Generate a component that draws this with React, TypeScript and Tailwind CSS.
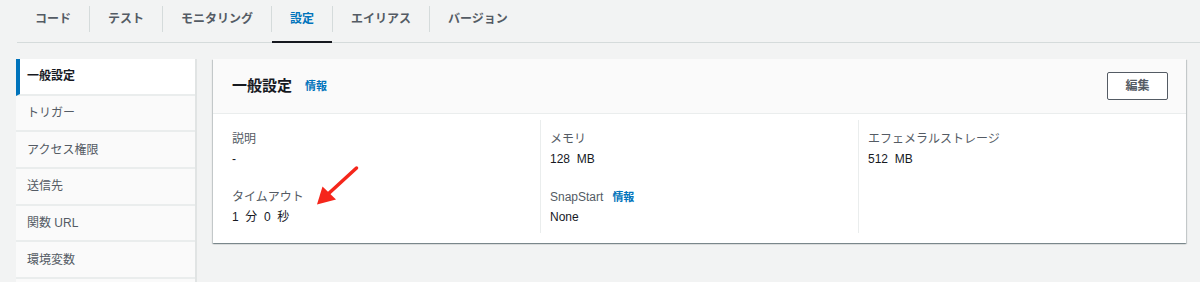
import React from "react";

const tabs = ["コード", "テスト", "モニタリング", "設定", "エイリアス", "バージョン"];
const navItems = ["一般設定", "トリガー", "アクセス権限", "送信先", "関数 URL", "環境変数", ""];

function Field({ label, value, info, className = "" }: { label: string; value: string; info?: boolean; className?: string }) {
  return (
    <div className={className}>
      <div className="flex items-center text-[12px] leading-[20px] text-[#545b64]">
        <span>{label}</span>
        {info && <span className="ml-[9px] text-[11px] font-bold text-[#0073bb]">情報</span>}
      </div>
      <div className="text-[12px] leading-[20px] text-[#16191f] whitespace-pre">{value}</div>
    </div>
  );
}

export default function App() {
  return (
    <div className="relative w-[1200px] h-[282px] overflow-hidden bg-[#f2f3f3] font-[family-name:'Liberation_Sans','Noto_Sans_CJK_JP',sans-serif]">
      {/* Tabs */}
      <div className="ml-[17px] h-[43px] border-b border-[#d5dbdb] flex">
        {tabs.map((t, i) => (
          <React.Fragment key={t}>
            {i > 0 && <div className="w-px h-[26px] bg-[#d5dbdb] self-start mt-[6px]" />}
            <div
              className={
                "relative h-full flex items-center pb-[4px] px-[18px] text-[12px] font-bold " +
                (t === "設定" ? "text-[#0073bb]" : "text-[#545b64]")
              }
            >
              {t}
              {t === "設定" && <div className="absolute left-0 right-0 bottom-[-1px] h-[2px] bg-[#16191f]" />}
            </div>
          </React.Fragment>
        ))}
      </div>

      <div className="flex gap-4 pl-4 pr-[14px] pt-4">
        {/* Side nav */}
        <div className="w-[181px] shrink-0 border-r-2 border-[#e1e4e4] flex flex-col">
          {navItems.map((n, i) => (
            <div
              key={i}
              className={
                "h-[36.67px] shrink-0 border-b-2 border-[#eaeded] flex items-center text-[12px] " +
                (i === 0
                  ? "bg-white border-l-4 border-l-[#0073bb] pl-[7px] font-bold text-[#16191f]"
                  : "bg-[#fafafa] pl-[11px] text-[#545b64]")
              }
            >
              {n}
            </div>
          ))}
        </div>

        {/* Panel */}
        <div className="flex-1 self-start bg-white shadow-[0_1px_1px_0_rgba(0,28,36,0.3),1px_1px_1px_0_rgba(0,28,36,0.15),-1px_1px_1px_0_rgba(0,28,36,0.15)]">
          <div className="h-[55px] bg-[#fafafa] border-b border-[#eaeded] flex items-center justify-between pl-[19px] pr-[18px]">
            <div className="flex items-center">
              <span className="text-[15px] font-bold text-[#16191f] leading-[20px]">一般設定</span>
              <span className="ml-[13px] text-[11px] font-bold text-[#0073bb] leading-[20px]">情報</span>
            </div>
            <button className="w-[61px] h-[28px] border border-[#545b64] rounded-[2px] bg-white text-[12px] font-bold text-[#545b64]">
              編集
            </button>
          </div>
          <div className="pl-[9px] pr-[10px] pt-[6px] pb-[10px] grid grid-cols-3">
            <div className="pl-[10px] pt-[9px] pb-[6px]">
              <Field label="説明" value="-" />
              <Field label="タイムアウト" value={"1\u00a0\u00a0分\u00a0\u00a00\u00a0\u00a0秒"} className="mt-[18px]" />
            </div>
            <div className="pl-[9px] pt-[9px] pb-[6px] border-l border-[#eaeded]">
              <Field label="メモリ" value={"128\u00a0\u00a0MB"} />
              <Field label="SnapStart" value="None" info className="mt-[18px]" />
            </div>
            <div className="pl-[9px] pt-[9px] pb-[6px] border-l border-[#eaeded]">
              <Field label="エフェメラルストレージ" value={"512\u00a0\u00a0MB"} />
            </div>
          </div>
        </div>
      </div>

      {/* Red arrow annotation */}
      <svg className="absolute left-0 top-0 pointer-events-none" width="1200" height="282" viewBox="0 0 1200 282">
        <line x1="356.5" y1="168" x2="327" y2="195" stroke="#f5261b" strokeWidth="3.5" strokeLinecap="round" />
        <polygon points="317,204.5 322.5,186.5 336,199.5" fill="#f5261b" />
      </svg>
    </div>
  );
}
